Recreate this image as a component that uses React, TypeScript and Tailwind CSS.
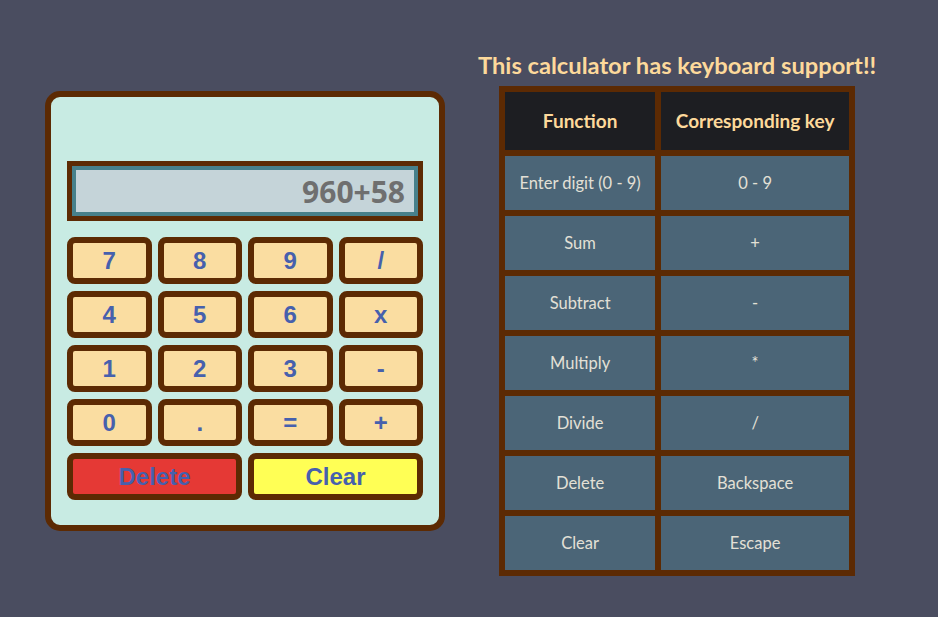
import React from "react";

const keys = ["7", "8", "9", "/", "4", "5", "6", "x", "1", "2", "3", "-", "0", ".", "=", "+"];

const rows: [string, string][] = [
  ["Enter digit (0 - 9)", "0 - 9"],
  ["Sum", "+"],
  ["Subtract", "-"],
  ["Multiply", "*"],
  ["Divide", "/"],
  ["Delete", "Backspace"],
  ["Clear", "Escape"],
];

export default function App() {
  return (
    <div className="w-[938px] h-[617px] bg-[#4a4d60] flex items-center pl-[45px] pt-[5px]">
      <div className="w-[400px] h-[440px] bg-[#c8ebe3] border-[6px] border-[#5c2a03] rounded-[15px] pt-[64px] px-[16px]">
        <div className="h-[60px] border-[5px] border-[#5c2a03] bg-[#47808a] p-[4px]">
          <div
            className="h-full bg-[#c5d4d9] flex items-center justify-end pr-[9px] text-[30px] font-bold text-[#6f6f6f]"
            style={{ fontFamily: '"Open Sans", sans-serif' }}
          >
            960+58
          </div>
        </div>
        <div
          className="mt-[16px] grid grid-cols-4 gap-x-[6px] gap-y-[7px]"
          style={{ fontFamily: '"Liberation Sans", Arial, sans-serif' }}
        >
          {keys.map((k) => (
            <div
              key={k}
              className="h-[47px] bg-[#fadda1] border-[6px] border-[#5c2a03] rounded-[8px] flex items-center justify-center text-[24px] font-bold text-[#4660ad]"
            >
              {k}
            </div>
          ))}
          <div className="col-span-2 h-[47px] bg-[#e53935] border-[6px] border-[#5c2a03] rounded-[8px] flex items-center justify-center text-[24px] font-bold text-[#4660ad]">
            Delete
          </div>
          <div className="col-span-2 h-[47px] bg-[#ffff55] border-[6px] border-[#5c2a03] rounded-[8px] flex items-center justify-center text-[24px] font-bold text-[#4660ad]">
            Clear
          </div>
        </div>
      </div>

      <div
        className="ml-[33px] mt-[4px] flex flex-col items-center"
        style={{ fontFamily: 'Lato, "Noto Sans", sans-serif' }}
      >
        <div className="text-[23.7px] font-bold text-[#fdd99b] leading-[30px] mb-[6px]">
          This calculator has keyboard support!!
        </div>
        <div className="bg-[#5c2a03] p-[6px] grid grid-cols-[150px_188px] gap-[6px]">
          <div className="h-[58px] bg-[#1d1e22] flex items-center justify-center text-[19px] font-bold text-[#fdd99b]">
            Function
          </div>
          <div className="h-[58px] bg-[#1d1e22] flex items-center justify-center text-[19px] font-bold text-[#fdd99b]">
            Corresponding key
          </div>
          {rows.map(([a, b]) => (
            <React.Fragment key={a}>
              <div className="h-[54px] bg-[#4b6577] flex items-center justify-center text-[16.5px] text-[#e3e0d6]">
                {a}
              </div>
              <div className="h-[54px] bg-[#4b6577] flex items-center justify-center text-[16.5px] text-[#e3e0d6]">
                {b}
              </div>
            </React.Fragment>
          ))}
        </div>
      </div>
    </div>
  );
}
